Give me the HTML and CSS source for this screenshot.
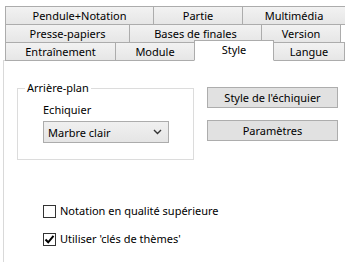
FILE: index.html
```html
<!DOCTYPE html>
<html lang="fr">
<head>
<meta charset="utf-8">
<link rel="stylesheet" href="styles.css">
</head>
<body>
<div class="tabs">
  <div class="row">
    <div class="tab w-pend">Pendule+Notation</div>
    <div class="tab w-partie">Partie</div>
    <div class="tab w-multi">Multimédia</div>
  </div>
  <div class="row">
    <div class="tab w-presse">Presse-papiers</div>
    <div class="tab w-bases">Bases de finales</div>
    <div class="tab w-version">Version</div>
  </div>
  <div class="row">
    <div class="tab w-entr">Entraînement</div>
    <div class="tab w-module">Module</div>
    <div class="tab w-style active">Style</div>
    <div class="tab w-langue">Langue</div>
  </div>
</div>
<div class="panel">
  <div class="top">
    <fieldset class="group">
      <legend class="legend">Arrière-plan</legend>
      <div class="label">Echiquier</div>
      <div class="select">
        <span>Marbre clair</span>
        <svg class="chev" width="9" height="6" viewBox="0 0 9 6"><polyline points="1,1 4.5,4.5 8,1" fill="none" stroke="#333" stroke-width="1.4"/></svg>
      </div>
    </fieldset>
    <div class="buttons">
      <div class="btn">Style de l'échiquier</div>
      <div class="btn">Paramètres</div>
    </div>
  </div>
  <div class="checks">
    <div class="check"><span class="box"></span><span>Notation en qualité supérieure</span></div>
    <div class="check"><span class="box checked"><svg width="11" height="11" viewBox="0 0 11 11"><path d="M1.5 5.5 L4.2 8.3 L9.5 1.8" fill="none" stroke="#000" stroke-width="2"/></svg></span><span>Utiliser 'clés de thèmes'</span></div>
  </div>
</div>
</body>
</html>
```

FILE: styles.css
```css
html, body {
  margin: 0;
  padding: 0;
  background: #ffffff;
  overflow: hidden;
  width: 345px;
  height: 262px;
  font-family: "Noto Sans", "DejaVu Sans", sans-serif;
  font-size: 11px;
  color: #000;
}
.tabs {
  padding-top: 6px;
  padding-left: 5px;
}
.row {
  display: flex;
  margin-top: -1px;
  white-space: nowrap;
}
.row:first-child { margin-top: 0; }
.tab {
  box-sizing: border-box;
  height: 19px;
  line-height: 17px;
  border: 1px solid #acacac;
  background: linear-gradient(#f2f2f2, #e6e6e6);
  text-align: center;
  margin-left: -1px;
  flex: none;
}
.tab:first-child { margin-left: 0; }
.w-pend { width: 149px; }
.w-partie { width: 90px; }
.w-multi { width: 104px; }
.w-presse { width: 125px; }
.w-bases { width: 133px; }
.w-version { width: 80px; }
.w-entr { width: 111px; }
.w-module { width: 80px; }
.w-style { width: 80px; }
.w-langue { width: 72px; }
.tab.active {
  position: relative;
  z-index: 2;
  background: #fff;
  height: 21px;
  margin-top: -2px;
  border-bottom-color: #fff;
  line-height: 17px;
}
.panel {
  margin-left: 3px;
  margin-top: -1px;
  border: 1px solid #d9d9d9;
  border-right: none;
  border-bottom: none;
  background: #fff;
  height: 202px;
}
.top {
  display: flex;
  align-items: flex-start;
  padding-top: 19px;
  padding-left: 13px;
}
.group {
  box-sizing: border-box;
  width: 177px;
  height: 80px;
  margin: 0;
  border: 1px solid #dcdcdc;
  padding: 6px 0 0 25px;
  min-width: 0;
}
.legend {
  padding: 0 2px;
  margin-left: -18px;
  line-height: 16px;
}
.label {
  line-height: 16px;
}
.select {
  box-sizing: border-box;
  width: 126px;
  height: 22px;
  margin-top: 3px;
  border: 1px solid #acacac;
  background: linear-gradient(#f0f0f0, #e5e5e5);
  display: flex;
  align-items: center;
  justify-content: space-between;
  padding: 0 6px 0 4px;
}
.buttons {
  display: flex;
  flex-direction: column;
  gap: 12px;
  margin-left: 13px;
  padding-top: 7px;
}
.btn {
  box-sizing: border-box;
  width: 131px;
  height: 21px;
  border: 1px solid #adadad;
  background: #e1e1e1;
  text-align: center;
  line-height: 19px;
}
.checks {
  display: flex;
  flex-direction: column;
  gap: 12px;
  padding-left: 39px;
  margin-top: 43px;
}
.check {
  display: flex;
  align-items: center;
  gap: 4px;
  line-height: 16px;
}
.box {
  box-sizing: border-box;
  width: 13px;
  height: 13px;
  border: 1px solid #333;
  background: #fff;
  display: flex;
  align-items: center;
  justify-content: center;
  flex: none;
}
.box svg { display: block; }
```
